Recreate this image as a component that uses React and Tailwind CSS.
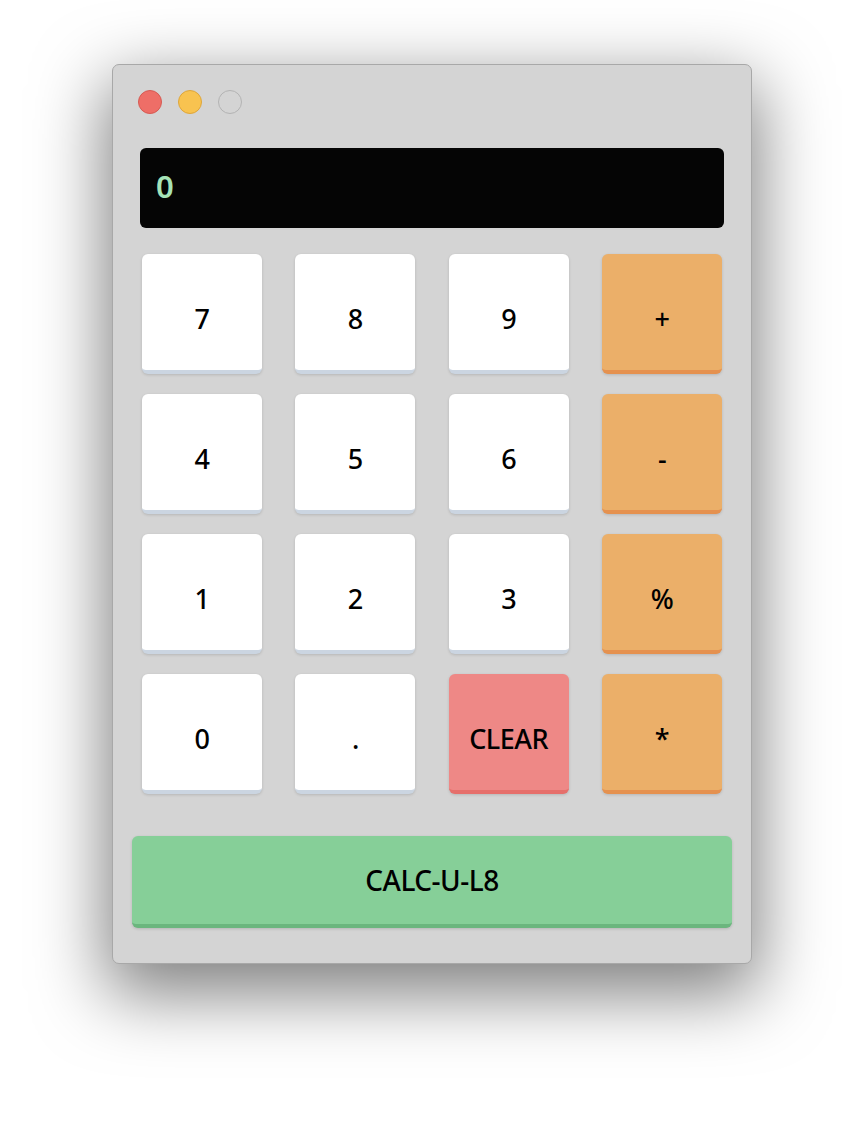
const keys = [
  { label: "7", kind: "num" },
  { label: "8", kind: "num" },
  { label: "9", kind: "num" },
  { label: "+", kind: "op" },
  { label: "4", kind: "num" },
  { label: "5", kind: "num" },
  { label: "6", kind: "num" },
  { label: "-", kind: "op" },
  { label: "1", kind: "num" },
  { label: "2", kind: "num" },
  { label: "3", kind: "num" },
  { label: "%", kind: "op" },
  { label: "0", kind: "num" },
  { label: ".", kind: "num" },
  { label: "CLEAR", kind: "clear" },
  { label: "*", kind: "op" },
];

const styles = {
  num: "bg-white border-b-[4px] border-[#cbd5e1]",
  op: "bg-[#ebaf69] border-b-[4px] border-[#e5914f]",
  clear: "bg-[#ee8886] border-b-[4px] border-[#e66f6b]",
};

export default function App() {
  return (
    <div
      className="min-h-[1124px] bg-white pt-[64px] flex justify-center"
      style={{ fontFamily: '"Noto Sans", "Open Sans", sans-serif' }}
    >
      {/* WINDOW */}
      <div className="w-[640px] h-[900px] bg-[#d4d4d4] rounded-[7px] border border-[#a8a8a8] shadow-[0_24px_70px_6px_rgba(0,0,0,0.5)] flex flex-col">
        {/* TITLE BAR */}
        <div className="flex gap-4 pl-[25px] pt-[25px] h-[83px]">
          <span className="w-6 h-6 rounded-full bg-[#ee6e67] border border-[#d65a53]"></span>
          <span className="w-6 h-6 rounded-full bg-[#f8c350] border border-[#dea63b]"></span>
          <span className="w-6 h-6 rounded-full bg-[#d4d4d4] border border-[#b3b3b3]"></span>
        </div>

        {/* DISPLAY */}
        <div className="mx-[27px] h-20 bg-[#050505] rounded-[6px] flex items-center px-4 pb-1">
          <span className="text-[31px] font-semibold text-[#a6e3b7]">0</span>
        </div>

        {/* KEYS */}
        <div className="grid grid-cols-[120px_120px_120px_120px] justify-between gap-y-5 mx-[29px] mt-[26px]">
          {keys.map((k) => (
            <button
              key={k.label}
              className={`h-[120px] pt-[14px] rounded-[6px] shadow-[0_1px_3px_rgba(0,0,0,0.15)] flex items-center justify-center text-[27px] font-medium tracking-[-0.5px] text-black ${styles[k.kind]}`}
            >
              {k.label}
            </button>
          ))}
        </div>

        {/* SUBMIT */}
        <button className="mx-[19px] mt-[42px] h-[92px] rounded-[6px] bg-[#86cf98] border-b-[4px] border-[#6bb67e] shadow-[0_1px_3px_rgba(0,0,0,0.15)] text-[28px] font-medium tracking-[-0.5px] text-black">
          CALC-U-L8
        </button>
      </div>
    </div>
  );
}
